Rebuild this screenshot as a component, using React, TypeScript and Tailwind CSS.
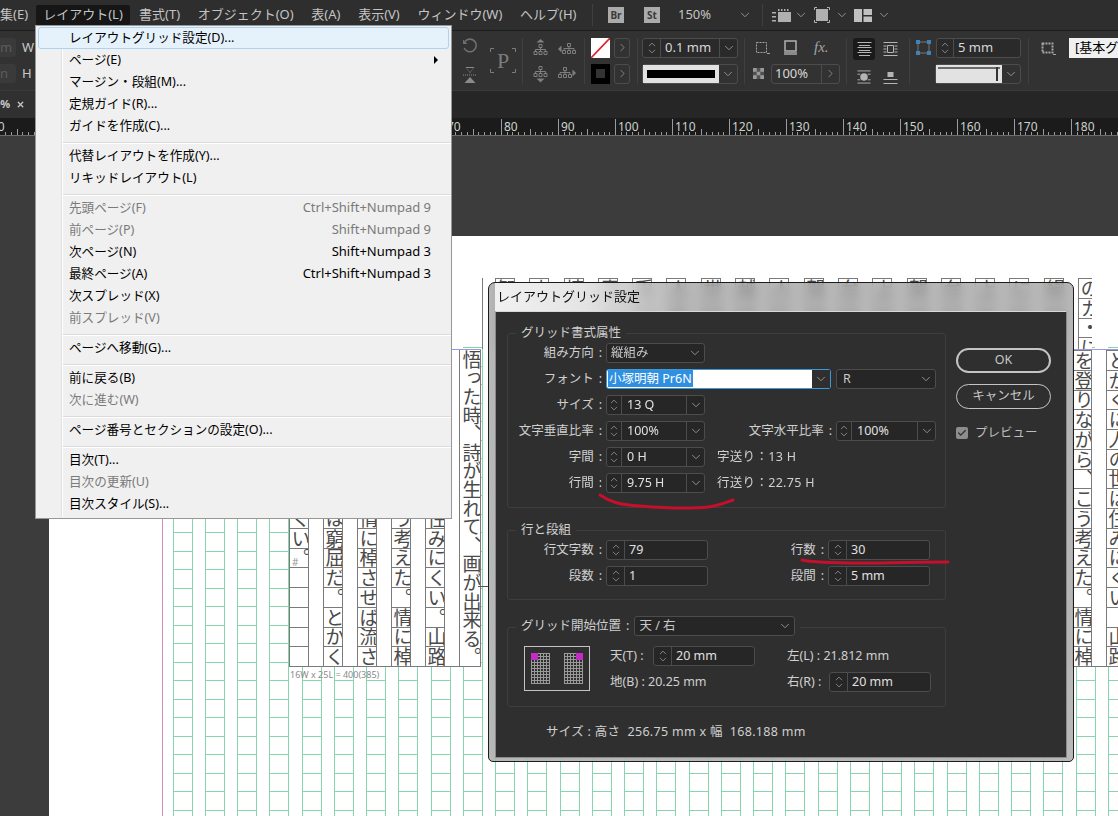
import React from "react";
import { Check, ChevronDown, ChevronRight, ChevronUp, X } from "lucide-react";

type MenuEntry = { label?: string; shortcut?: string; disabled?: boolean; arrow?: boolean; active?: boolean; sep?: boolean };

const menuEntries: MenuEntry[] = [
  { label: "レイアウトグリッド設定(D)...", active: true },
  { label: "ページ(E)", arrow: true },
  { label: "マージン・段組(M)..." },
  { label: "定規ガイド(R)..." },
  { label: "ガイドを作成(C)..." },
  { sep: true },
  { label: "代替レイアウトを作成(Y)..." },
  { label: "リキッドレイアウト(L)" },
  { sep: true },
  { label: "先頭ページ(F)", shortcut: "Ctrl+Shift+Numpad 9", disabled: true },
  { label: "前ページ(P)", shortcut: "Shift+Numpad 9", disabled: true },
  { label: "次ページ(N)", shortcut: "Shift+Numpad 3" },
  { label: "最終ページ(A)", shortcut: "Ctrl+Shift+Numpad 3" },
  { label: "次スプレッド(X)" },
  { label: "前スプレッド(V)", disabled: true },
  { sep: true },
  { label: "ページへ移動(G)..." },
  { sep: true },
  { label: "前に戻る(B)" },
  { label: "次に進む(W)", disabled: true },
  { sep: true },
  { label: "ページ番号とセクションの設定(O)..." },
  { sep: true },
  { label: "目次(T)..." },
  { label: "目次の更新(U)", disabled: true },
  { label: "目次スタイル(S)..." },
];

const topMenus = ["書式(T)", "オブジェクト(O)", "表(A)", "表示(V)", "ウィンドウ(W)", "ヘルプ(H)"];

// text frames on the page, left to right
const frameColumns = [
  "安い所へ引き越しくい#",
  "れる。意地を通せは窮屈だ。とかく",
  "働けば角が立つ。情に棹させば流さ",
  "を登りながら、こう考えた。情に棹",
  "とかくに人の世は住みにくい。山路",
];
const topStrip = "智山情意兎人世越人賀台上賀台上に絹の";

const Sep = () => <div className="h-[46px] w-px shrink-0 bg-[#3f3f3f]" />;

const Chev = ({ size = 14 }: { size?: number }) => (
  <ChevronDown size={size} strokeWidth={1.4} className="shrink-0 text-[#a5a5a5]" />
);

const Spinner = ({ w = "w-[15px]" }: { w?: string }) => (
  <div className={`flex h-full shrink-0 flex-col items-center justify-center border-r border-[#4c4c4c] ${w}`}>
    <ChevronUp size={12} strokeWidth={1.4} className="-mb-[2px] text-[#b5b5b5]" />
    <ChevronDown size={12} strokeWidth={1.4} className="-mt-[2px] text-[#b5b5b5]" />
  </div>
);

const Select = ({ value, className }: { value: string; className: string }) => (
  <div className={`flex h-5 shrink-0 items-center rounded-[3px] border border-[#4c4c4c] bg-[#262626] pl-[4px] text-[#c8c8c8] ${className}`}>
    <span className="flex-1 truncate">{value}</span>
    <div className="flex h-full w-[18px] items-center justify-center">
      <Chev />
    </div>
  </div>
);

const SpinChev = ({ value }: { value: string }) => (
  <div className="flex h-5 w-[99px] shrink-0 items-center rounded-[3px] border border-[#4c4c4c] bg-[#262626] text-[#e0e0e0]">
    <Spinner />
    <span className="flex-1 pl-[5px]">{value}</span>
    <div className="flex h-full w-[18px] items-center justify-center border-l border-[#4c4c4c]">
      <Chev />
    </div>
  </div>
);

const SpinInput = ({ value, w = "w-[102px]" }: { value: string; w?: string }) => (
  <div className={`flex h-5 shrink-0 items-center rounded-[3px] border border-[#4c4c4c] bg-[#262626] text-[#e0e0e0] ${w}`}>
    <Spinner w="w-[18px]" />
    <span className="pl-[4px]">{value}</span>
  </div>
);

const Label = ({ text, w = "w-[98px]" }: { text: string; w?: string }) => (
  <span className={`shrink-0 pr-[1px] text-right text-[#d0d0d0] ${w}`}>
    {text}
    <span className="ml-[5px] mr-[3px]">:</span>
  </span>
);

const Row = ({ children }: { children: React.ReactNode }) => <div className="flex h-5 items-center">{children}</div>;

const Legend = ({ children }: { children: React.ReactNode }) => (
  <div className="absolute -top-[10px] left-[8px] bg-[#2f2f2f] px-[5px] text-[#d0d0d0]">{children}</div>
);

const RotateIcon = () => (
  <svg width="16" height="16" viewBox="0 0 16 16" fill="none" stroke="#6f6f6f" strokeWidth="1.6">
    <path d="M3 3.5A6.3 6.3 0 1 1 2.2 10" />
    <path d="M1 1.5V6H5.5Z" fill="#6f6f6f" stroke="none" />
  </svg>
);

const FlipIcon = () => (
  <svg width="16" height="18" viewBox="0 0 16 18" fill="#8a8a8a">
    <path d="M3.5 1H12.5L8 7ZM4.5 2H11.5L8 6.2Z" fillRule="evenodd" />
    <path d="M1 9h14" stroke="#8a8a8a" strokeDasharray="1 1" />
    <path d="M2.5 17L8 11L13.5 17Z" />
  </svg>
);

const PBox = () => (
  <div className="relative flex h-[25px] w-[26px] items-center justify-center font-['Liberation_Serif',serif] text-[22px] leading-none text-[#7c7c7c]">
    P
    <svg className="absolute inset-0" width="26" height="25" fill="none" stroke="#7c7c7c">
      <path d="M.5 4V.5H4M22 .5H25.5V4M.5 21V24.5H4M22 24.5H25.5V21" />
    </svg>
  </div>
);

const OrgIcon = ({ arrow }: { arrow: "up" | "down" | "left" | "right" }) => {
  const wide = arrow === "left" || arrow === "right";
  return (
    <svg width={wide ? 18 : 15} height={wide ? 12 : 17} viewBox={wide ? "0 0 18 12" : "0 0 15 17"} fill="none" stroke="#7f7f7f">
      <g transform={arrow === "up" ? "translate(0.5 5)" : arrow === "left" ? "translate(4 0)" : arrow === "right" ? "translate(0 0)" : "translate(0.5 0)"}>
        <path d="M5.5.5h3v3h-3zM.5 7.5h3v3h-3zM5.5 7.5h3v3h-3zM10.5 7.5h3v3h-3zM7 3.5v4M2 7.5v-2h10v2" />
      </g>
      {arrow === "up" && <path d="M3.5 3.5L7.5 0L11.500 3.5Z" fill="#7f7f7f" stroke="none" />}
      {arrow === "down" && <path d="M3.500 12.500L7.500 16.500L11.500 12.500Z" fill="#7f7f7f" stroke="none" />}
      {arrow === "left" && <path d="M3.500 2.500L0 6L3.500 9.500Z" fill="#7f7f7f" stroke="none" />}
      {arrow === "right" && <path d="M14.500 2.500L18 6L14.500 9.500Z" fill="#7f7f7f" stroke="none" />}
    </svg>
  );
};

const GreyButton = () => (
  <div className="ml-[4px] flex h-5 w-4 items-center justify-center rounded-[3px] border border-[#4c4c4c]">
    <ChevronRight size={13} strokeWidth={1.3} className="text-[#a5a5a5]" />
  </div>
);

const AlignIcon = ({ kind }: { kind: "a" | "b" | "c" | "d" }) => (
  <svg width="15" height="14" viewBox="0 0 15 14" fill="none" stroke="#b4b4b4">
    {kind === "a" && <path d="M.5.5h14M2 3.500h11M.5 5.500h14M2 8.500h11M.5 10.500h14M2 13.500h11" />}
    {kind === "b" && <path d="M.5.5h14M.5 13.500h14M.5 4h3M.5 7h3M.5 10h3M11.500 4h3M11.500 7h3M11.500 10h3M4.500 3.500h6v7h-6z" />}
    {kind === "c" && (
      <>
        <path d="M.5.5h14M.5 13.500h14M.5 4h3M.5 10h3M11.500 4h3M11.500 10h3" />
        <circle cx="7.500" cy="7" r="4" fill="#b4b4b4" stroke="none" />
      </>
    )}
    {kind === "d" && (
      <>
        <path d="M.5 9.500h14M.5 13.500h14" />
        <rect x="4.500" y="2" width="6" height="5" fill="#b4b4b4" stroke="none" />
      </>
    )}
  </svg>
);

const MenuBar = () => (
  <div className="flex h-[30px] shrink-0 items-center bg-[#2e2e2e] text-[13px] text-[#c4c4c4]">
    <div className="flex w-[592px] shrink-0 items-center overflow-hidden">
      <span className="-ml-[13px] w-[49px] shrink-0">編集(E)</span>
      <span className="flex h-[20px] w-[94px] shrink-0 items-center justify-center rounded-[2px] bg-[#161616]">レイアウト(L)</span>
      <div className="flex gap-[17.7px] pl-[9px]">
        {topMenus.map((m) => (
          <span key={m} className="shrink-0">
            {m}
          </span>
        ))}
      </div>
    </div>
    <div className="h-[22px] w-px bg-[#3f3f3f]" />
    <div className="ml-[15px] flex h-[16px] w-[16px] items-center justify-center bg-[#ababab] text-[10px] font-bold text-[#3a3a3a]">Br</div>
    <div className="ml-[20px] flex h-[16px] w-[16px] items-center justify-center bg-[#ababab] text-[10px] font-bold text-[#3a3a3a]">St</div>
    <span className="ml-[18px] w-[60px]">150%</span>
    <Chev />
    <div className="ml-[10px] h-[22px] w-px bg-[#3f3f3f]" />
    <svg className="ml-[9px]" width="19" height="16" viewBox="0 0 19 16" fill="#b0b0b0">
      <rect x="6" y="5" width="13" height="10" />
      <path d="M6 2h1.500v2H6zM9 2h1.500v2H9zM12 2h1.500v2H12zM15 2h1.500v2H15zM0 5h4v1.500H0zM0 9h4v1.500H0zM0 13h4v1.500H0z" />
    </svg>
    <span className="ml-[3px]">
      <Chev />
    </span>
    <svg className="ml-[6px]" width="16" height="16" viewBox="0 0 16 16" fill="#b0b0b0">
      <rect x="2" y="2" width="12" height="12" />
      <path d="M.5 3V.5H3M13 .5h2.500V3M.5 13v2.500H3M13 15.500h2.500V13" fill="none" stroke="#b0b0b0" />
    </svg>
    <span className="ml-[5px]">
      <Chev />
    </span>
    <svg className="ml-[5px]" width="18" height="13" viewBox="0 0 18 13" fill="#c0c0c0">
      <path d="M0 0h8v13H0zM9.500 0H18v6H9.500zM9.500 7.500H18V13H9.500z" />
    </svg>
    <span className="ml-[5px]">
      <Chev />
    </span>
  </div>
);

const ControlBar = () => (
  <div className="flex h-[60px] shrink-0 items-center border-t border-[#1d1d1d] bg-[#323232] text-[13px] text-[#d8d8d8]">
    <div className="flex h-[46px] w-[452px] shrink-0 flex-col justify-between text-[#c8c8c8]">
      <Row>
        <span className="w-[16px] rounded-r-[3px] bg-[#3a3a3a] text-[#5c5c5c]">m</span>
        <span className="ml-[6px]">W</span>
      </Row>
      <Row>
        <span className="w-[16px] rounded-r-[3px] bg-[#3a3a3a] text-[#5c5c5c]">n</span>
        <span className="ml-[6px]">H</span>
      </Row>
    </div>
    <div className="ml-[10px] flex h-[46px] w-4 flex-col items-center justify-between">
      <RotateIcon />
      <FlipIcon />
    </div>
    <div className="ml-[12px]">
      <PBox />
    </div>
    <div className="ml-[6px]">
      <Sep />
    </div>
    <div className="ml-[10px] flex h-[46px] w-[15px] flex-col justify-between py-[1px]">
      <OrgIcon arrow="up" />
      <OrgIcon arrow="down" />
    </div>
    <div className="ml-[10px] flex h-[46px] w-[18px] flex-col justify-between py-[5px]">
      <OrgIcon arrow="left" />
      <OrgIcon arrow="right" />
    </div>
    <div className="ml-[8px]">
      <Sep />
    </div>
    <div className="ml-[6px] flex h-[46px] flex-col justify-between">
      <div className="flex items-center">
        <svg width="19" height="20" viewBox="0 0 19 20">
          <rect width="19" height="20" fill="#fff" />
          <path d="M0 20L19 0" stroke="#d8222a" strokeWidth="1.6" />
        </svg>
        <GreyButton />
      </div>
      <div className="flex items-center">
        <div className="flex h-5 w-[19px] items-center justify-center bg-black">
          <div className="h-[9px] w-[9px] bg-[#333]" />
        </div>
        <GreyButton />
      </div>
    </div>
    <div className="ml-[7px]">
      <Sep />
    </div>
    <div className="ml-[4px] flex h-[46px] w-[96px] shrink-0 flex-col justify-between">
      <div className="flex h-5 items-center rounded-[3px] border border-[#4c4c4c] bg-[#2a2a2a]">
        <Spinner w="w-[18px]" />
        <span className="flex-1 pl-[4px]">0.1 mm</span>
        <div className="flex h-full w-[18px] items-center justify-center border-l border-[#4c4c4c]">
          <Chev />
        </div>
      </div>
      <div className="flex h-5 items-center rounded-[3px] border border-[#4c4c4c]">
        <div className="flex h-full flex-1 items-center bg-[#e2e2e2] px-[4px]">
          <div className="h-[8px] w-full bg-black" />
        </div>
        <div className="flex h-full w-[18px] items-center justify-center">
          <Chev />
        </div>
      </div>
    </div>
    <div className="ml-[6px]">
      <Sep />
    </div>
    <div className="ml-[7px] flex h-[46px] w-[88px] shrink-0 flex-col justify-between">
      <div className="flex h-5 items-center text-[#a5a5a5]">
        <svg className="ml-[3px]" width="15" height="14" viewBox="0 0 15 14" fill="none" stroke="#a5a5a5">
          <rect x="1.500" y="1.500" width="10" height="10" strokeDasharray="2 1" />
          <path d="M12 12.500h3" />
        </svg>
        <svg className="ml-[14px]" width="13" height="15" viewBox="0 0 13 15">
          <rect x="1" y="1" width="11" height="10" fill="#323232" stroke="#b0b0b0" strokeWidth="1.500" />
          <rect x="0" y="12" width="13" height="3" fill="#8a8a8a" />
        </svg>
        <span className="ml-[17px] font-['Liberation_Serif',serif] text-[15px] italic">fx.</span>
      </div>
      <div className="flex h-5 items-center">
        <svg className="ml-[1px]" width="11" height="11" viewBox="0 0 11 11" fill="#9a9a9a">
          <path d="M0 0h11v11H0z" fillOpacity=".3" />
          <path d="M0 0h3.700v3.700H0zM7.300 0H11v3.700H7.300zM3.700 3.700h3.600v3.600H3.700zM0 7.300h3.700V11H0zM7.300 7.300H11V11H7.300z" />
        </svg>
        <div className="ml-[7px] flex h-5 flex-1 items-center rounded-[3px] border border-[#4c4c4c] pl-[3px]">
          <span className="flex-1">100%</span>
          <div className="flex h-full w-[18px] items-center justify-center border-l border-[#4c4c4c]">
            <ChevronRight size={13} strokeWidth={1.3} className="text-[#a5a5a5]" />
          </div>
        </div>
      </div>
    </div>
    <div className="ml-[6px]">
      <Sep />
    </div>
    <div className="ml-[6px] flex h-[46px] w-[45px] shrink-0 flex-col justify-between">
      <div className="flex items-center">
        <div className="flex h-[22px] w-[22px] shrink-0 items-center justify-center rounded-[3px] bg-[#1a1a1a]">
          <AlignIcon kind="a" />
        </div>
        <span className="ml-[8px]">
          <AlignIcon kind="b" />
        </span>
      </div>
      <div className="flex items-center pl-[4px]">
        <AlignIcon kind="c" />
        <span className="ml-[12px]">
          <AlignIcon kind="d" />
        </span>
      </div>
    </div>
    <div className="ml-[11px]">
      <Sep />
    </div>
    <div className="ml-[6px] flex h-[46px] w-[105px] shrink-0 flex-col justify-between">
      <div className="flex items-center">
        <svg width="15" height="15" viewBox="0 0 15 15" fill="#2f86c9">
          <path d="M0 0h4v4H0zM11 0h4v4h-4zM0 11h4v4H0zM11 11h4v4h-4z" />
          <path d="M2 2h11v11H2z" fill="none" stroke="#777" />
        </svg>
        <div className="ml-[5px] flex h-5 flex-1 items-center rounded-[3px] border border-[#4c4c4c] bg-[#2a2a2a]">
          <Spinner w="w-[17px]" />
          <span className="pl-[4px]">5 mm</span>
        </div>
      </div>
      <div className="flex h-5 items-center justify-end">
        <div className="flex h-5 w-[86px] items-center rounded-[3px] border border-[#4c4c4c]">
          <div className="relative h-full flex-1 bg-[#e2e2e2]">
            <div className="mx-[2px] mt-[2px] h-[2px] bg-[#6a6a6a]" />
            <div className="absolute right-[4px] top-[2px] h-[14px] w-[2px] bg-[#333]" />
          </div>
          <div className="flex h-full w-[18px] items-center justify-center">
            <Chev />
          </div>
        </div>
      </div>
    </div>
    <div className="ml-[7px]">
      <Sep />
    </div>
    <svg className="mb-[24px] ml-[12px] shrink-0" width="15" height="13" viewBox="0 0 15 13" fill="none" stroke="#a5a5a5">
      <rect x="1.500" y="1.500" width="10" height="9" strokeDasharray="2 1" strokeWidth="2" />
      <path d="M12 12.500h3" />
    </svg>
    <div className="mb-[26px] ml-[13px] flex h-5 min-w-0 flex-1 items-center overflow-hidden whitespace-nowrap bg-[#f0f0f0] pl-[6px] text-black">[基本グリッド]</div>
  </div>
);

const Ruler = () => {
  const ticks = Array.from({ length: 200 }, (_, i) => i);
  return (
    <div className="relative h-[17px] shrink-0 overflow-hidden bg-[#1b1b1b] text-[12px] leading-[17px] text-[#cbd2cc]">
      <div className="-ml-[12px] flex">
        {Array.from({ length: 21 }, (_, i) => (
          <span key={i} className="w-[57px] shrink-0 pl-[3px]">
            {Math.abs(-10 + i * 10)}
          </span>
        ))}
      </div>
      <svg className="absolute inset-0" width="1118" height="17">
        {ticks.map((i) => {
          const x = Math.round(-12 + i * 5.7) + 0.5;
          const h = i % 10 === 0 ? 16 : i % 5 === 0 ? 6 : 3;
          return <line key={i} x1={x} x2={x} y1={17 - h} y2={17} stroke="#9b9b9b" />;
        })}
      </svg>
    </div>
  );
};

const Cell = ({ ch }: { ch?: string }) => (
  <div className="relative flex h-[19.75px] w-full shrink-0 items-center justify-center overflow-hidden border-t border-[#7a7a7a] bg-white text-[19px] leading-none text-[#4a4a4a] [writing-mode:vertical-rl]">
    {ch === "#" ? (
      <>
        。<span className="absolute bottom-0 left-[2px] text-[10px] text-[#999] [writing-mode:horizontal-tb]">#</span>
      </>
    ) : (
      ch
    )}
  </div>
);

const FrameCol = ({ text, rows = 16 }: { text: string; rows?: number }) => {
  const chars = Array.from(text);
  return (
    <div className="flex w-5 shrink-0 flex-col overflow-hidden border-x border-[#7a7a7a]">
      {Array.from({ length: rows }, (_, i) => (
        <Cell key={i} ch={chars[i]} />
      ))}
    </div>
  );
};

// green layout grid drawn as whole pixel lines
const LayoutGrid = () => {
  const cols = Array.from({ length: 30 }, (_, i) => Math.round(123.7 + i * 32.25));
  const rows = Array.from({ length: 26 }, (_, i) => Math.round(111.3 + i * 18.5));
  return (
    <svg className="absolute inset-0" width="1069" height="580" fill="none" stroke="#86d5ae">
      {cols.map((x) => (
        <g key={x}>
          <path d={`M${x + 0.5} 113V580M${x + 19.5} 113V580`} />
          {rows.map((y) => (
            <path key={y} d={`M${x} ${y + 0.5}H${x + 19}`} />
          ))}
        </g>
      ))}
      <path d="M113.500 40V580" stroke="#d68cc0" />
    </svg>
  );
};

const Page = () => (
  <div className="absolute bottom-0 left-[49px] right-0 top-[100px] bg-white">
    <LayoutGrid />
    {/* top frame, only its first rows show above the dialog */}
    <div className="absolute left-[433px] top-[42px] flex h-[71px] w-[610px] overflow-hidden border-l border-[#7a7a7a] bg-white pl-[12px]">
      <div className="flex gap-[14.3px]">
        {Array.from(topStrip).map((ch, i) => (
          <FrameCol key={i} text={i === 17 ? "のカ・に" : ch + "山路情に"} rows={4} />
        ))}
      </div>
    </div>
    {/* main frame, left part */}
    <div className="absolute left-[240px] top-[113px] flex gap-[14px] border-b border-t border-[#7a7a7a] border-t-[#9a9ae0] bg-white">
      <FrameCol text={frameColumns[0]} />
      <FrameCol text={frameColumns[1]} />
      <FrameCol text={frameColumns[2]} />
      <FrameCol text={frameColumns[3]} />
      <FrameCol text={frameColumns[4]} />
      <div className="flex w-[22px] shrink-0 flex-col overflow-hidden border-x border-[#7a7a7a]">
        {Array.from("悟った時、詩が生れて、画が出来る。").map((ch, i) => (
          <div key={i} className="flex h-[18.6px] shrink-0 items-center justify-center text-[19px] leading-none text-[#4a4a4a] [writing-mode:vertical-rl]">
            {ch}
          </div>
        ))}
      </div>
    </div>
    <div className="absolute left-[429px] top-[350px] h-px w-[10px] bg-[#555]" />
    {/* main frame, right part */}
    <div className="absolute left-[1023px] top-[113px] flex gap-[14px] border-b border-t border-[#7a7a7a] border-t-[#9a9ae0] bg-white">
      <FrameCol text={frameColumns[3]} />
      <FrameCol text={frameColumns[4]} />
    </div>
    <span className="absolute left-[241px] top-[432px] text-[9px] text-[#8a8a8a]">16W x 25L = 400(385)</span>
  </div>
);

const LayoutMenu = () => (
  <div className="absolute left-[35px] top-[25px] h-[494px] w-[417px] border border-[#979797] bg-[#f0f0f0] py-[1px] text-[13px] text-black">
    <div className="absolute bottom-[1px] left-[25px] top-[1px] w-[2px] border-l border-[#e0e0e0] bg-white" />
    {menuEntries.map((item, i) =>
      item.sep ? (
        <div key={i} className="relative h-2 pt-[5px]">
          <div className="ml-[27px] h-[2px] border-t border-[#dcdcdc] bg-white" />
        </div>
      ) : (
        <div
          key={i}
          className={`relative mx-[2px] flex h-[22px] items-center rounded-[3px] border pl-[30px] pr-[17px] ${
            item.active ? "border-[#aed3ef] bg-[#e6f2fb]" : "border-transparent"
          } ${item.disabled ? "text-[#7a7a7a]" : ""}`}
        >
          <span className="flex-1 text-[12.6px]">{item.label}</span>
          {item.shortcut && <span>{item.shortcut}</span>}
          {item.arrow && <span className="absolute right-[10px] h-0 w-0 border-y-[4px] border-l-[4px] border-y-transparent border-l-black" />}
        </div>
      )
    )}
  </div>
);

const GridPreview = () => (
  <div className="ml-[16px] h-[45px] w-[66px] shrink-0 border border-[#c4c4c4]">
    <svg width="64" height="43" viewBox="0 0 64 43">
      <defs>
        <pattern id="miniGrid" width="3" height="3" patternUnits="userSpaceOnUse">
          <path d="M.5 0V3M0 .5H3" fill="none" stroke="#9a9a9a" />
        </pattern>
      </defs>
      <rect x="6" y="6" width="19" height="31" fill="url(#miniGrid)" />
      <rect x="39" y="6" width="19" height="31" fill="url(#miniGrid)" />
      <rect x="6" y="6" width="7" height="7" fill="#c02cc4" />
      <rect x="51" y="6" width="7" height="7" fill="#c02cc4" />
    </svg>
  </div>
);

const GridDialog = () => (
  <div className="absolute left-[488px] top-[282px] flex h-[480px] w-[586px] flex-col rounded-b-[5px] rounded-t-[7px] border border-[#1c1c1c] bg-[#a0a0a0]/75 px-[6px] pb-[5px] backdrop-blur-[5px]">
    <div className="relative flex h-[28px] shrink-0 items-center overflow-hidden text-[13px] text-[#111]">
      <div className="absolute -left-[6px] top-0 h-full w-[190px] bg-gradient-to-r from-[#f2f2f2] via-[#e4e4e4] to-transparent" />
      <span className="relative pl-[2px]">レイアウトグリッド設定</span>
    </div>
    <div className="flex flex-1 border border-x-[#8a8a8a] border-b-[#8a8a8a] border-t-[#d8d8d8] bg-[#2f2f2f] pl-[11px] pt-[21px] text-[12.5px]">
      <div className="flex w-[439px] shrink-0 flex-col">
        <div className="relative flex h-[175px] shrink-0 flex-col gap-[6px] rounded-[3px] border border-[#3e3e3e] pt-[9px]">
          <Legend>グリッド書式属性</Legend>
          <Row>
            <Label text="組み方向" />
            <Select value="縦組み" className="w-[99px]" />
          </Row>
          <Row>
            <Label text="フォント" />
            <div className="flex h-5 w-[225px] shrink-0 items-center rounded-[3px] border border-[#3a9bd8] bg-white pl-[1px]">
              <span className="flex-1">
                <span className="bg-[#2f8fe0] px-[1px] text-white">小塚明朝 Pr6N</span>
              </span>
              <div className="flex h-full w-[18px] items-center justify-center bg-[#2f2f2f]">
                <Chev />
              </div>
            </div>
            <Select value="R" className="ml-[5px] w-[100px] pl-[6px]" />
          </Row>
          <Row>
            <Label text="サイズ" />
            <SpinChev value="13 Q" />
          </Row>
          <Row>
            <Label text="文字垂直比率" />
            <SpinChev value="100%" />
            <Label text="文字水平比率" w="w-[131px]" />
            <div className="flex h-5 w-[100px] shrink-0 items-center rounded-[3px] border border-[#4c4c4c] bg-[#262626] text-[#e0e0e0]">
              <Spinner />
              <span className="flex-1 pl-[5px]">100%</span>
              <div className="flex h-full w-[18px] items-center justify-center border-l border-[#4c4c4c]">
                <Chev />
              </div>
            </div>
          </Row>
          <Row>
            <Label text="字間" />
            <SpinChev value="0 H" />
            <span className="ml-[12px] tracking-[0.3px] text-[#d0d0d0]">字送り：13 H</span>
          </Row>
          <Row>
            <Label text="行間" />
            <SpinChev value="9.75 H" />
            <span className="ml-[12px] tracking-[0.3px] text-[#d0d0d0]">行送り：22.75 H</span>
          </Row>
        </div>
        <div className="relative mt-[22px] flex h-[70px] shrink-0 flex-col gap-[6px] rounded-[3px] border border-[#3e3e3e] pt-[9px]">
          <Legend>行と段組</Legend>
          <Row>
            <Label text="行文字数" />
            <SpinInput value="79" />
            <Label text="行数" w="w-[120px]" />
            <SpinInput value="30" />
          </Row>
          <Row>
            <Label text="段数" />
            <SpinInput value="1" />
            <Label text="段間" w="w-[120px]" />
            <SpinInput value="5 mm" />
          </Row>
        </div>
        <div className="relative mt-[27px] flex h-[80px] shrink-0 rounded-[3px] border border-[#3e3e3e] pt-[18px]">
          <div className="absolute -top-[12px] left-[8px] flex items-center bg-[#2f2f2f] px-[5px] text-[#d0d0d0]">
            <span>
              グリッド開始位置<span className="ml-[5px]">:</span>
            </span>
            <Select value="天 / 右" className="ml-[5px] w-[161px]" />
          </div>
          <GridPreview />
          <div className="ml-[20px] flex w-[175px] shrink-0 flex-col gap-[6px] text-[#d0d0d0]">
            <Row>
              <span className="w-[43px]">天(T) :</span>
              <SpinInput value="20 mm" />
            </Row>
            <Row>
              <span className="pt-[1px]">地(B) : 20.25 mm</span>
            </Row>
          </div>
          <div className="ml-[2px] flex flex-col gap-[6px] text-[#d0d0d0]">
            <Row>
              <span>左(L) : 21.812 mm</span>
            </Row>
            <Row>
              <span className="w-[42px]">右(R) :</span>
              <SpinInput value="20 mm" />
            </Row>
          </div>
        </div>
        <div className="flex h-[50px] items-center pl-[39px] tracking-[0.3px] text-[#d0d0d0]">
          サイズ : 高さ&nbsp; 256.75 mm x 幅&nbsp; 168.188 mm
        </div>
      </div>
      <div className="ml-[10px] flex w-[95px] flex-col pt-[15px] text-[#c8c8c8]">
        <div className="flex h-[25px] items-center justify-center rounded-full border-2 border-[#c4c4c4]">OK</div>
        <div className="mt-[11px] flex h-[25px] items-center justify-center rounded-full border border-[#c4c4c4]">キャンセル</div>
        <div className="mt-[15px] flex items-center">
          <div className="flex h-3 w-3 items-center justify-center rounded-[2px] bg-[#8d8d8d]">
            <Check size={10} strokeWidth={3} className="text-[#2f2f2f]" />
          </div>
          <span className="ml-[7px] text-[#bdbdbd]">プレビュー</span>
        </div>
      </div>
    </div>
  </div>
);

const App = () => {
  return (
    <div className="relative flex h-[816px] w-[1118px] flex-col overflow-hidden bg-[#3c3c3c] font-['Noto_Sans','Noto_Sans_CJK_JP',sans-serif]">
      <MenuBar />
      <ControlBar />
      <div className="flex h-[28px] shrink-0 items-center border-t border-[#3a3a3a] bg-[#262626]">
        <div className="flex h-full w-[36px] items-center bg-[#303030] pl-0 text-[11px] font-bold text-[#c8c8c8]">
          <span className="-ml-[6px] w-[22px]">0%</span>
          <X size={9} strokeWidth={3.5} />
        </div>
      </div>
      <Ruler />
      <div className="relative flex-1 border-t border-[#6c6c6c]">
        <Page />
      </div>
      <LayoutMenu />
      <GridDialog />
      {/* hand drawn red marks */}
      <svg className="pointer-events-none absolute inset-0" width="1118" height="816" fill="none" stroke="#c4102a" strokeWidth="3" strokeLinecap="round">
        <path d="M600 495C610 502 620 505 640 506C665 508 690 509 708 507C718 506 725 503 733 500" />
        <path d="M802 560C815 563 840 563 860 563C890 563 920 562 948 562" />
      </svg>
    </div>
  );
};

export default App;
